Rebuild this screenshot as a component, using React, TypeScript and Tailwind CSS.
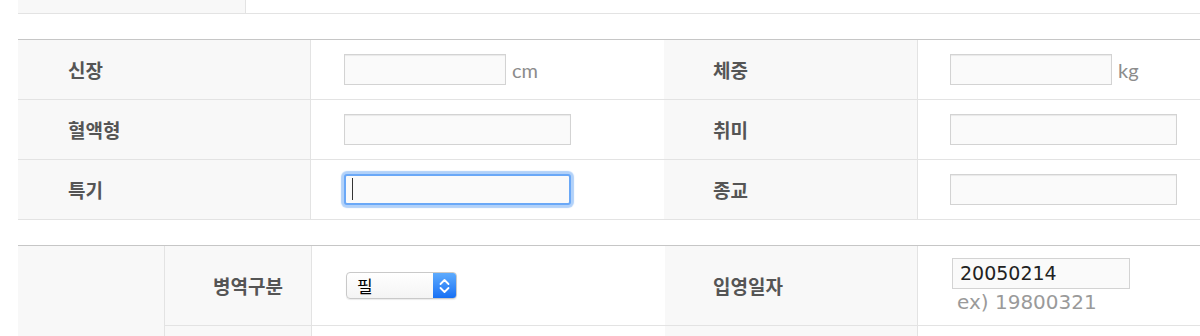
import React from "react";

const label =
  "font-['Noto_Sans_CJK_KR',sans-serif] font-bold text-[19px] leading-none text-[#555]";
const unit = "ml-[6px] font-['Lato',sans-serif] text-[20px] leading-none text-[#8c8c8c]";
const field =
  "h-[31px] rounded-none border border-[#d3d3d3] bg-[#fafafa] shadow-[inset_0_1px_1px_rgba(0,0,0,0.07)] outline-none";

function Input({ width }: { width: number }) {
  return <input type="text" readOnly className={field} style={{ width }} />;
}

function Row({
  left,
  right,
  leftField,
  rightField,
}: {
  left: string;
  right: string;
  leftField: React.ReactNode;
  rightField: React.ReactNode;
}) {
  return (
    <div className="grid h-[60px] grid-cols-[293px_353px_254px_1fr] border-b border-[#e3e3e3]">
      <div className="flex items-center border-r border-[#e3e3e3] bg-[#f8f8f8] pl-[50px]">
        <span className={label}>{left}</span>
      </div>
      <div className="flex items-center pl-[33px]">{leftField}</div>
      <div className="flex items-center border-r border-[#e3e3e3] bg-[#f8f8f8] pl-[49px]">
        <span className={label}>{right}</span>
      </div>
      <div className="flex items-center pl-[32px]">{rightField}</div>
    </div>
  );
}

function FakeSelect() {
  return (
    <div className="flex h-[27px] w-[111px] overflow-hidden rounded-[4px] border border-[#c9c9c9] bg-gradient-to-b from-white to-[#f4f4f4] shadow-[0_1px_1px_rgba(0,0,0,0.08)]">
      <span className="flex flex-1 items-center pl-[10px] font-['Noto_Sans_CJK_KR',sans-serif] text-[17px] leading-none text-black">
        필
      </span>
      <span className="flex w-[23px] items-center justify-center bg-gradient-to-b from-[#5eabfd] to-[#1670f4]">
        <svg width="23" height="27" viewBox="0 0 23 27" fill="none">
          <polyline points="7.5,12 11.5,8 15.5,12" stroke="white" strokeWidth="1.8" strokeLinecap="round" strokeLinejoin="round" />
          <polyline points="7.5,16 11.5,20 15.5,16" stroke="white" strokeWidth="1.8" strokeLinecap="round" strokeLinejoin="round" />
        </svg>
      </span>
    </div>
  );
}

export default function App() {
  return (
    <div className="h-[336px] w-[1200px] overflow-hidden bg-white pl-[18px]">
      {/* end of previous table */}
      <div className="flex h-[14px] border-b border-[#e3e3e3]">
        <div className="w-[228px] border-r border-[#e3e3e3] bg-[#f8f8f8]" />
      </div>

      {/* body info */}
      <div className="mt-[25px] border-t border-[#c6c6c6]">
        <Row
          left="신장"
          right="체중"
          leftField={
            <>
              <Input width={162} />
              <span className={unit}>cm</span>
            </>
          }
          rightField={
            <>
              <Input width={162} />
              <span className={unit}>kg</span>
            </>
          }
        />
        <Row left="혈액형" right="취미" leftField={<Input width={227} />} rightField={<Input width={227} />} />
        <Row
          left="특기"
          right="종교"
          leftField={
            <div className="relative">
              <input
                type="text"
                readOnly
                className="h-[31px] w-[227px] rounded-[3px] border-2 border-[#6aa8f7] bg-[#fafafa] shadow-[0_0_1px_3px_rgba(125,178,245,0.6)] outline-none"
              />
              <span className="absolute left-[8px] top-[4px] h-[22px] w-px bg-[#333]" />
            </div>
          }
          rightField={<Input width={227} />}
        />
      </div>

      {/* military service */}
      <div className="mt-[25px] flex border-t border-[#c6c6c6]">
        <div className="w-[147px] border-r border-[#e3e3e3] bg-[#f8f8f8]" />
        <div className="flex-1">
          <div className="grid h-[80px] grid-cols-[147px_353px_253px_1fr] border-b border-[#e3e3e3]">
            <div className="flex items-center border-r border-[#e3e3e3] bg-[#f8f8f8] pl-[48px]">
              <span className={label}>병역구분</span>
            </div>
            <div className="flex items-center pl-[34px]">
              <FakeSelect />
            </div>
            <div className="flex items-center border-r border-[#e3e3e3] bg-[#f8f8f8] pl-[48px]">
              <span className={label}>입영일자</span>
            </div>
            <div className="flex flex-col justify-center pl-[34px]">
              <input
                type="text"
                readOnly
                value="20050214"
                className="h-[31px] w-[178px] border border-[#d3d3d3] bg-[#fafafa] pl-[7px] font-['DejaVu_Sans',sans-serif] text-[19px] text-[#222] outline-none"
              />
              <span className="mt-[1px] pl-[5px] font-['DejaVu_Sans',sans-serif] text-[20px] leading-[24px] text-[#9a9a9a]">
                ex) 19800321
              </span>
            </div>
          </div>
          <div className="grid h-[60px] grid-cols-[147px_353px_253px_1fr]">
            <div className="border-r border-[#e3e3e3] bg-[#f8f8f8]" />
            <div />
            <div className="border-r border-[#e3e3e3] bg-[#f8f8f8]" />
            <div />
          </div>
        </div>
      </div>
    </div>
  );
}
